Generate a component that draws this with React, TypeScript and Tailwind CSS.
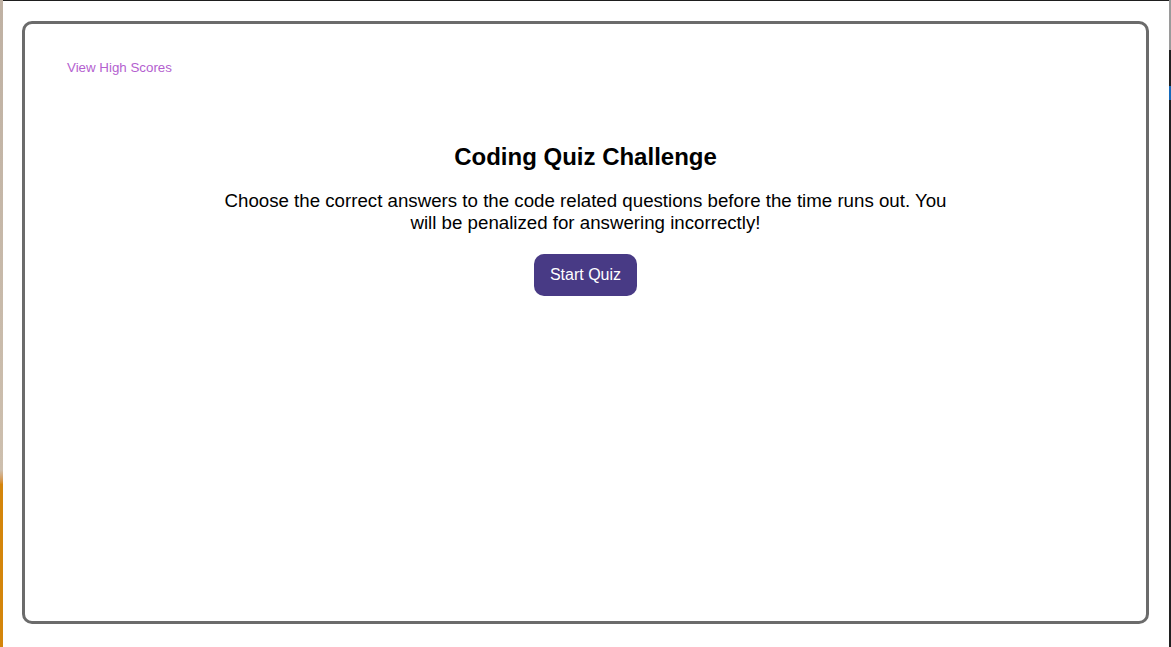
export default function App() {
  return (
    <div
      className="flex h-[647px] w-[1171px] overflow-hidden bg-white"
      style={{ fontFamily: '"Liberation Sans", Arial, sans-serif' }}
    >
      {/* desktop peeking on the left */}
      <div className="flex w-[3px] shrink-0 flex-col">
        <div className="h-[470px] bg-gradient-to-b from-[#bfb1a3] to-[#cdbfae]" />
        <div className="h-[14px] bg-gradient-to-b from-[#cdbfae] to-[#d6880c]" />
        <div className="flex-1 bg-[#d4850b]" />
      </div>

      <main className="flex-1 border-t border-[#1e1e1e] pl-[19px] pr-[20px] pt-[20px]">
        <section className="h-[603px] rounded-[10px] border-[3px] border-[#6b6b6b] px-[42px] pt-[36px]">
          <div className="text-[13.33px] leading-[15px]">
            <a href="#" className="text-[#b45fcf]">
              View High Scores
            </a>
          </div>

          <div className="mt-[68px] flex flex-col items-center">
            <h1 className="text-[24px] font-bold leading-[28px] text-black">Coding Quiz Challenge</h1>
            <p className="mt-[19px] max-w-[740px] text-center text-[18.7px] leading-[22px] text-black">
              Choose the correct answers to the code related questions before the time runs out. You will be
              penalized for answering incorrectly!
            </p>
            <button className="mt-[20px] rounded-[10px] bg-[#483a85] px-[15.5px] py-[12px] text-[16px] leading-[18px] text-white">
              Start Quiz
            </button>
          </div>
        </section>
      </main>

      {/* neighbouring window edge on the right */}
      <div className="flex w-[2px] shrink-0 flex-col">
        <div className="h-[50px] bg-[#9a9a9a]" />
        <div className="h-[36px] bg-[#202020]" />
        <div className="h-[14px] bg-[#1668b8]" />
        <div className="flex-1 bg-[#202020]" />
      </div>
    </div>
  );
}
